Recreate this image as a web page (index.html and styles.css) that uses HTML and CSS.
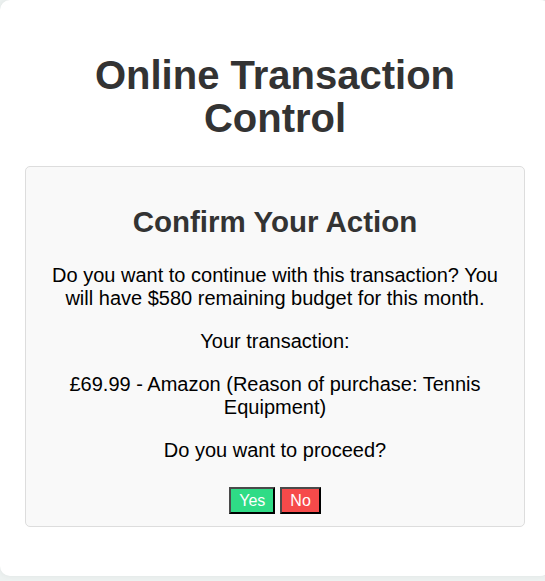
FILE: index.html
```html
<!DOCTYPE html>
<html lang="en">
<head>
<meta charset="utf-8">
<title>Online Transaction Control</title>
<link rel="stylesheet" href="styles.css">
</head>
<body>
<div class="container">
  <h1 class="title">Online Transaction Control</h1>
  <div class="card">
    <h2 class="card-title">Confirm Your Action</h2>
    <p class="text">Do you want to continue with this transaction? You will have $580 remaining budget for this month.</p>
    <p class="text">Your transaction:</p>
    <p class="text">£69.99 - Amazon (Reason of purchase: Tennis Equipment)</p>
    <p class="text">Do you want to proceed?</p>
    <div class="actions">
      <button class="btn btn-yes">Yes</button>
      <button class="btn btn-no">No</button>
    </div>
  </div>
</div>
</body>
</html>
```

FILE: styles.css
```css
html, body {
  margin: 0;
  padding: 0;
}
body {
  background: #edf2f1;
  font-family: "Liberation Sans", Arial, sans-serif;
  overflow: hidden;
  height: 581px;
}
.container {
  width: 550px;
  box-sizing: border-box;
  background: #ffffff;
  border-radius: 10px;
  box-shadow: 0 0 6px rgba(0, 0, 0, 0.06);
  padding: 53.5px 25px 49.5px;
}
.title {
  font-size: 40px;
  line-height: 43px;
  font-weight: bold;
  color: #333333;
  text-align: center;
  margin: 0 0 26.5px;
}
.card {
  background: #f9f9f9;
  border: 1px solid #dddddd;
  border-radius: 5px;
  padding: 13px 20px 12px;
  text-align: center;
}
.card-title {
  font-size: 29.5px;
  line-height: 34px;
  font-weight: bold;
  color: #333333;
  margin: 24.5px 0 25px;
}
.text {
  font-size: 20px;
  line-height: 23px;
  color: #000000;
  margin: 20px 0;
}
.actions {
  display: flex;
  justify-content: center;
  gap: 5px;
  margin-top: 25px;
}
.btn {
  font-family: "Liberation Sans", Arial, sans-serif;
  font-size: 16px;
  line-height: 19px;
  color: #ffffff;
  padding: 2px 8px;
  border-style: solid;
  border-width: 2px;
  border-color: #4a4a4a #000000 #000000 #4a4a4a;
  border-radius: 0;
  cursor: pointer;
}
.btn-yes {
  background: #2fdc86;
}
.btn-no {
  background: #f64a4a;
}
```
